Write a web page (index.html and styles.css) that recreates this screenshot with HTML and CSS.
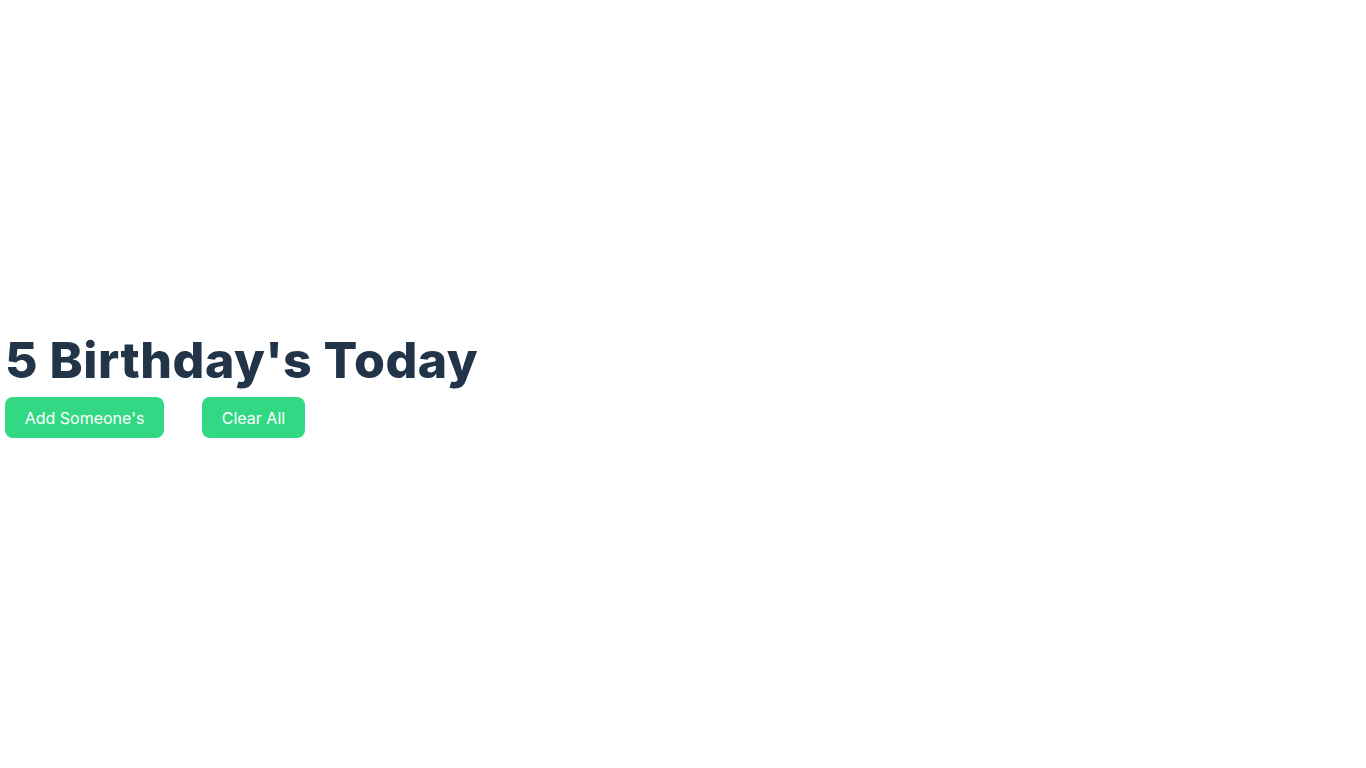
FILE: index.html
```html
<!DOCTYPE html>
<html lang="en">
<head>
<meta charset="utf-8">
<title>Birthday Reminder</title>
<link rel="stylesheet" href="styles.css">
</head>
<body>
<main class="page">
  <section class="hero">
    <h1 class="title">5 Birthday's Today</h1>
    <div class="actions">
      <button class="btn">Add Someone's</button>
      <button class="btn">Clear All</button>
    </div>
  </section>
  <section class="list"></section>
</main>
</body>
</html>
```
FILE: styles.css
```css
html, body {
  margin: 0;
  padding: 0;
  background: #ffffff;
  font-family: "Inter", "Liberation Sans", sans-serif;
}
.page {
  width: 100vw;
}
.hero {
  height: 100vh;
  display: flex;
  flex-direction: column;
  justify-content: center;
  padding-left: 5px;
  box-sizing: border-box;
}
.title {
  margin: 0 0 7px 0;
  font-size: 50px;
  font-weight: 800;
  letter-spacing: 0.5px;
  color: #213448;
  line-height: 1.2;
}
.actions {
  display: flex;
  gap: 38px;
}
.btn {
  font-family: inherit;
  font-size: 16px;
  color: #ffffff;
  background: #33d885;
  border: none;
  border-radius: 8px;
  padding: 0 19.7px;
  height: 41px;
  cursor: pointer;
}
.list {
  height: 1990px;
}
```
